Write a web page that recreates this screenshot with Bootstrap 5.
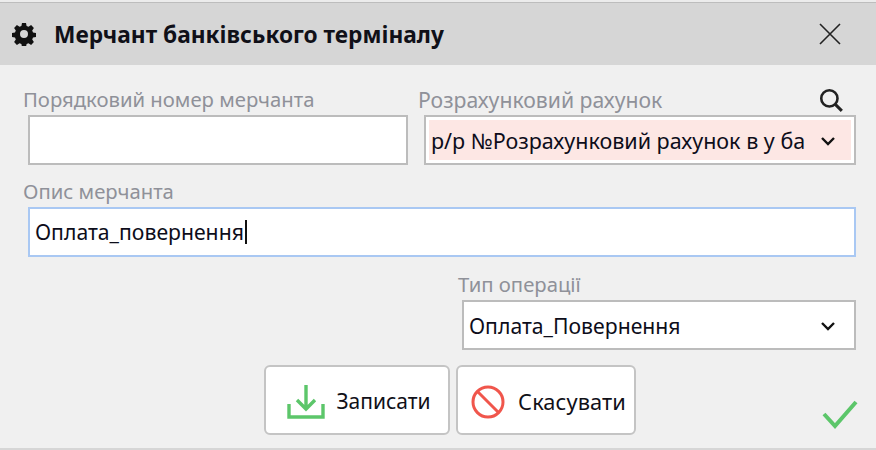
<!DOCTYPE html>
<html lang="uk">
<head>
<meta charset="utf-8">
<title>Мерчант</title>
<link href="https://cdn.jsdelivr.net/npm/bootstrap@5.3.0/dist/css/bootstrap.min.css" rel="stylesheet">
<style>
html,body{width:876px;height:450px;overflow:hidden;background:#f0f0f0;}
body{font-family:"Noto Sans","DejaVu Sans",sans-serif;font-size:21.2px;color:#0d0d1a;line-height:1;}
.dlg{width:876px;height:450px;border-top:2px solid #ececec;border-bottom:2px solid #d6d6d6;}
.dlg-head{height:63px;background:#d6d6d6;border-top:1px solid #bdbdbd;padding:0 34px 0 12px;}
.dlg-title{font-weight:700;font-size:22.7px;margin-left:18px;padding-top:2px;color:#101018;}
.dlg-body{padding:0 20px 0 23px;}
.fld-row{display:flex;}
.lbl{color:#8f9199;font-size:20.3px;line-height:25px;height:28px;}
.lbl-wide{font-size:21.2px;}
.fld{height:50px;border:2px solid #bcbcbc;background:#fff;display:flex;align-items:center;padding:2px 18px 0 5px;white-space:nowrap;overflow:hidden;}
.fld-pink{background:#fde7e4;box-shadow:inset 0 0 0 3px #fff;font-size:21.5px;padding-top:1px;}
.fld-focus{border-color:#a9c8f3;padding-top:0;}
.caret-bar{display:inline-block;width:2px;height:24px;background:#111;margin-left:1px;}
.col-a{width:385px;padding-top:22px;}
.col-a .fld{margin-left:5px;width:380px;}
.col-b{width:438px;margin-left:10px;padding-top:22px;}
.col-b .fld{margin-left:6px;width:432px;}
.col-c{width:833px;padding-top:14px;}
.col-c .fld{margin-left:5px;width:828px;}
.col-d{width:398px;margin-left:435px;padding-top:15px;}
.col-d .fld{margin-left:4px;width:394px;padding-left:5px;}
.btn-row{padding-left:241px;padding-top:15px;position:relative;}
.act{height:70px;background:#fff;border:2px solid #c4c4c4;border-radius:6px;color:#101018;font-size:21px;padding:4px 0 0;}
.act-save{width:186px;margin-right:6px;padding-left:4px;}
.act-save svg{margin-right:3px;}
.act-cancel{width:180px;font-size:21.8px;letter-spacing:.1px;gap:13px;}
.act-cancel svg{margin-left:5px;}
.ok-mark{position:absolute;left:799px;top:49px;}
.seek-icon{margin-right:12px;}
</style>
</head>
<body>
<div class="dlg">
  <div class="dlg-head d-flex align-items-center">
    <svg width="24" height="24" viewBox="0 0 24 24"><path fill="#111" fill-rule="evenodd" d="M10 1h4l.6 3 1.9.8 2.6-1.7 2.8 2.8-1.7 2.6.8 1.9 3 .6v4l-3 .6-.8 1.9 1.7 2.6-2.8 2.8-2.6-1.7-1.9.8-.6 3h-4l-.6-3-1.9-.8-2.6 1.7-2.8-2.8 1.7-2.6-.8-1.9-3-.6v-4l3-.6.8-1.9-1.7-2.6 2.8-2.8 2.6 1.7 1.9-.8zM12 8a4 4 0 1 0 0 8 4 4 0 0 0 0-8z"/></svg>
    <span class="dlg-title">Мерчант банківського терміналу</span>
    <svg class="ms-auto" width="24" height="24" viewBox="0 0 24 24"><path d="M2 2l20 20M22 2L2 22" stroke="#222" stroke-width="1.6" fill="none"/></svg>
  </div>
  <div class="dlg-body">
    <div class="fld-row">
      <div class="col-a">
        <div class="lbl">Порядковий номер мерчанта</div>
        <div class="fld"></div>
      </div>
      <div class="col-b">
        <div class="lbl lbl-wide d-flex justify-content-between">
          <span>Розрахунковий рахунок</span>
          <svg class="flex-shrink-0 seek-icon" width="26" height="26" viewBox="0 0 24 24"><circle cx="10.5" cy="10.5" r="7.5" fill="none" stroke="#222" stroke-width="2.4"/><path d="M16 16l6 6" stroke="#222" stroke-width="2.8"/></svg>
        </div>
        <div class="fld fld-pink">
          <span class="flex-grow-1">р/р №Розрахунковий рахунок в у ба</span>
          <svg class="flex-shrink-0" width="16" height="10" viewBox="0 0 16 10"><path d="M2 2l6 6 6-6" fill="none" stroke="#111" stroke-width="2.4"/></svg>
        </div>
      </div>
    </div>
    <div class="col-c">
      <div class="lbl">Опис мерчанта</div>
      <div class="fld fld-focus"><span>Оплата_повернення</span><span class="caret-bar"></span></div>
    </div>
    <div class="col-d">
      <div class="lbl">Тип операції</div>
      <div class="fld">
        <span class="flex-grow-1">Оплата_Повернення</span>
        <svg class="flex-shrink-0" width="16" height="10" viewBox="0 0 16 10"><path d="M2 2l6 6 6-6" fill="none" stroke="#111" stroke-width="2.4"/></svg>
      </div>
    </div>
    <div class="btn-row d-flex">
      <button class="btn act act-save d-flex align-items-center justify-content-center gap-2">
        <svg width="38" height="38" viewBox="0 0 38 38"><path d="M2 21v13h34V21M19 2v24M10 17l9 9 9-9" fill="none" stroke="#5cc66a" stroke-width="3.4"/></svg>
        <span>Записати</span>
      </button>
      <button class="btn act act-cancel d-flex align-items-center justify-content-center">
        <svg width="34" height="34" viewBox="0 0 34 34"><circle cx="17" cy="17" r="15" fill="none" stroke="#f0564c" stroke-width="3"/><path d="M7 7l20 20" stroke="#f0564c" stroke-width="3"/></svg>
        <span>Скасувати</span>
      </button>
      <svg class="ok-mark" width="36" height="30" viewBox="0 0 36 30"><path d="M2 15l11 12L34 3" fill="none" stroke="#5cc66a" stroke-width="4"/></svg>
    </div>
  </div>
</div>
<script src="https://cdn.jsdelivr.net/npm/bootstrap@5.3.0/dist/js/bootstrap.bundle.min.js"></script>
</body>
</html>
